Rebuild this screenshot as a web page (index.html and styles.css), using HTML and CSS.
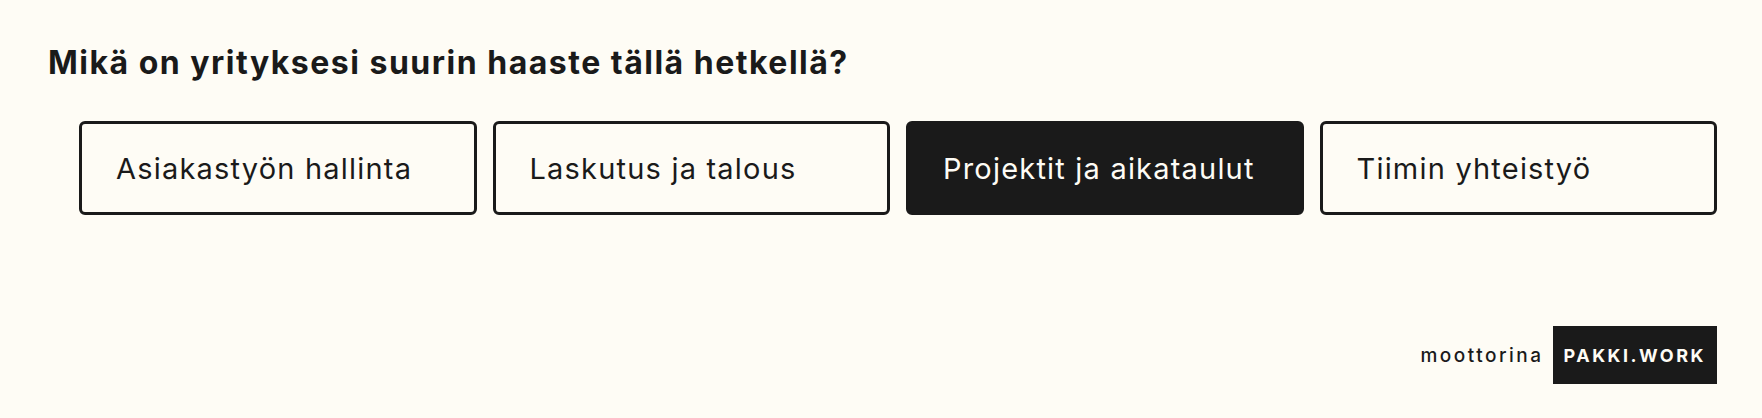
FILE: index.html
```html
<!DOCTYPE html>
<html lang="fi">
<head>
    <meta charset="UTF-8">
    <meta name="viewport" content="width=device-width, initial-scale=1.0">
    <title>Kysely | Pakki.work</title>
    <link rel="stylesheet" href="styles.css">
</head>
<body>
    <main class="quiz">
        <h1 class="question">Mikä on yrityksesi suurin haaste tällä hetkellä?</h1>

        <div class="options">
            <button class="option">Asiakastyön hallinta</button>
            <button class="option">Laskutus ja talous</button>
            <button class="option selected">Projektit ja aikataulut</button>
            <button class="option">Tiimin yhteistyö</button>
        </div>
    </main>

    <footer class="powered">
        <span class="powered-label">moottorina</span>
        <span class="powered-logo">PAKKI.WORK</span>
    </footer>
</body>
</html>
```

FILE: styles.css
```css
body {
    margin: 0;
    font-family: Inter, "Noto Sans", sans-serif;
    background: #fefcf5;
    color: #1a1a1a;
}

.quiz {
    padding: 44px 45px 0 48px;
}

.question {
    margin: 0;
    font-size: 32px;
    line-height: 1.2;
    font-weight: 700;
    letter-spacing: 1.5px;
}

.options {
    display: grid;
    grid-template-columns: repeat(4, 1fr);
    gap: 16px;
    margin: 39px 0 0 31px;
}

.option {
    height: 94px;
    padding: 0 34px;
    border: 3px solid #1a1a1a;
    border-radius: 6px;
    background: #fefcf5;
    color: #1a1a1a;
    font-family: inherit;
    font-size: 29px;
    letter-spacing: 1.2px;
    text-align: left;
    cursor: pointer;
}

.option.selected {
    background: #1a1a1a;
    color: #fefcf5;
}

.powered {
    display: flex;
    justify-content: flex-end;
    align-items: center;
    gap: 9px;
    padding: 111px 45px 0 0;
}

.powered-label {
    font-size: 19px;
    font-weight: 500;
    letter-spacing: 2.5px;
}

.powered-logo {
    display: flex;
    align-items: center;
    height: 58px;
    padding: 0 11px;
    background: #1a1a1a;
    color: #fefcf5;
    font-size: 18px;
    font-weight: 700;
    letter-spacing: 2.5px;
}
```
